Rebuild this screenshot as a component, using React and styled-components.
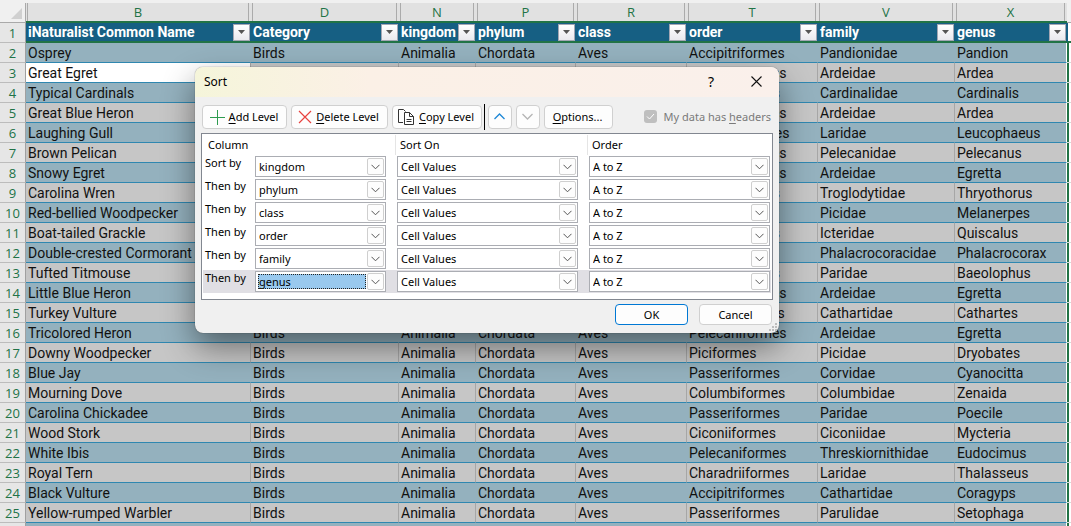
import React, { useState } from "react";
import styled, { createGlobalStyle } from "styled-components";

const columns = [
  { letter: "B", name: "iNaturalist Common Name", width: 225 },
  { letter: "D", name: "Category", width: 148 },
  { letter: "N", name: "kingdom", width: 77 },
  { letter: "P", name: "phylum", width: 100 },
  { letter: "R", name: "class", width: 111 },
  { letter: "T", name: "order", width: 131 },
  { letter: "V", name: "family", width: 137 },
  { letter: "X", name: "genus", width: 112 },
];

// common name, order, family, genus
const birds = [
  ["Osprey", "Accipitriformes", "Pandionidae", "Pandion"],
  ["Great Egret", "Pelecaniformes", "Ardeidae", "Ardea"],
  ["Typical Cardinals", "Passeriformes", "Cardinalidae", "Cardinalis"],
  ["Great Blue Heron", "Pelecaniformes", "Ardeidae", "Ardea"],
  ["Laughing Gull", "Charadriiformes", "Laridae", "Leucophaeus"],
  ["Brown Pelican", "Pelecaniformes", "Pelecanidae", "Pelecanus"],
  ["Snowy Egret", "Pelecaniformes", "Ardeidae", "Egretta"],
  ["Carolina Wren", "Passeriformes", "Troglodytidae", "Thryothorus"],
  ["Red-bellied Woodpecker", "Piciformes", "Picidae", "Melanerpes"],
  ["Boat-tailed Grackle", "Passeriformes", "Icteridae", "Quiscalus"],
  ["Double-crested Cormorant", "Suliformes", "Phalacrocoracidae", "Phalacrocorax"],
  ["Tufted Titmouse", "Passeriformes", "Paridae", "Baeolophus"],
  ["Little Blue Heron", "Pelecaniformes", "Ardeidae", "Egretta"],
  ["Turkey Vulture", "Accipitriformes", "Cathartidae", "Cathartes"],
  ["Tricolored Heron", "Pelecaniformes", "Ardeidae", "Egretta"],
  ["Downy Woodpecker", "Piciformes", "Picidae", "Dryobates"],
  ["Blue Jay", "Passeriformes", "Corvidae", "Cyanocitta"],
  ["Mourning Dove", "Columbiformes", "Columbidae", "Zenaida"],
  ["Carolina Chickadee", "Passeriformes", "Paridae", "Poecile"],
  ["Wood Stork", "Ciconiiformes", "Ciconiidae", "Mycteria"],
  ["White Ibis", "Pelecaniformes", "Threskiornithidae", "Eudocimus"],
  ["Royal Tern", "Charadriiformes", "Laridae", "Thalasseus"],
  ["Black Vulture", "Accipitriformes", "Cathartidae", "Coragyps"],
  ["Yellow-rumped Warbler", "Passeriformes", "Parulidae", "Setophaga"],
];

const levels = ["kingdom", "phylum", "class", "order", "family", "genus"];

const Sheet = () => {
  return (
    <Grid>
      <colgroup>
        <col style={{ width: 26 }} />
        {columns.map((col) => (
          <col key={col.letter} style={{ width: col.width }} />
        ))}
        <col />
      </colgroup>
      <thead>
        <tr>
          <Corner>
            <svg width="12" height="12" viewBox="0 0 12 12">
              <path d="M12 0V11H1Z" fill="#d0d0d0" />
            </svg>
          </Corner>
          {columns.map((col) => (
            <ColumnLetter key={col.letter} scope="col">
              <span>{col.letter}</span>
            </ColumnLetter>
          ))}
          <TailLetter />
        </tr>
      </thead>
      <tbody>
        <tr>
          <RowNumber scope="row">1</RowNumber>
          {columns.map((col) => (
            <FieldCell key={col.letter} scope="col">
              <Field>
                <span>{col.name}</span>
                <FilterButton aria-label={`Filter ${col.name}`}>
                  <svg width="9" height="5" viewBox="0 0 9 5">
                    <path d="M1 0H8L4.500 4Z" fill="#555" />
                  </svg>
                </FilterButton>
              </Field>
            </FieldCell>
          ))}
          <TailField />
        </tr>
        {birds.map(([common, order, family, genus], i) => (
          <BirdRow key={common} $banded={i % 2 === 0}>
            <RowNumber scope="row">{i + 2}</RowNumber>
            <Cell $active={i === 1}>{common}</Cell>
            <Cell>Birds</Cell>
            <Cell>Animalia</Cell>
            <Cell>Chordata</Cell>
            <Cell>Aves</Cell>
            <Cell>{order}</Cell>
            <Cell>{family}</Cell>
            <LastCell>{genus}</LastCell>
            <TailCell />
          </BirdRow>
        ))}
        <BirdRow $banded>
          <RowNumber />
          {columns.slice(1).map((col) => (
            <Cell key={col.letter} />
          ))}
          <LastCell />
          <TailCell />
        </BirdRow>
      </tbody>
    </Grid>
  );
};

const Combo = ({ id, label, options, value, selected }) => {
  return (
    <ComboBox>
      <Select id={id} aria-label={label} defaultValue={value} $selected={selected}>
        {options.map((option) => (
          <option key={option}>{option}</option>
        ))}
      </Select>
      <ComboArrow>
        <svg width="9" height="6" viewBox="0 0 9 6">
          <path d="M0.500 0.800L4.500 4.800L8.500 0.800" fill="none" stroke="#555" />
        </svg>
      </ComboArrow>
    </ComboBox>
  );
};

const SortDialog = () => {
  const [current, setCurrent] = useState(levels.length - 1);

  return (
    <Dialog role="dialog" aria-labelledby="sort-title">
      <TitleBar>
        <Title id="sort-title">Sort</Title>
        <TitleButton aria-label="Help">?</TitleButton>
        <TitleButton aria-label="Close">
          <svg width="11" height="11" viewBox="0 0 11 11">
            <path d="M0.500 0.500L10.500 10.500M10.500 0.500L0.500 10.500" stroke="#111" strokeWidth="1.100" />
          </svg>
        </TitleButton>
      </TitleBar>

      <Toolbar>
        <Button $width={85}>
          <svg width="16" height="16" viewBox="0 0 16 16">
            <path d="M8.500 1V16M1 8.500H16" stroke="#2e9b4f" />
          </svg>
          <span><u>A</u>dd Level</span>
        </Button>
        <Button $width={97}>
          <svg width="14" height="14" viewBox="0 0 14 14">
            <path d="M1 1L13 13M13 1L1 13" stroke="#e8423f" strokeWidth="1.200" />
          </svg>
          <span><u>D</u>elete Level</span>
        </Button>
        <Button $width={90}>
          <svg width="17" height="16" viewBox="0 0 17 16" fill="none" stroke="#333">
            <path d="M5 13.500H0.500V0.500H5.500L7.500 2.500" />
            <path d="M6.500 3.500H11.500L15.500 7.500V15.500H6.500Z" fill="#fff" />
            <path d="M11.500 3.500V7.500H15.500M8.500 10.500H13.500M8.500 12.500H13.500" />
          </svg>
          <span><u>C</u>opy Level</span>
        </Button>
        <Divider />
        <Button $width={24} aria-label="Move Up">
          <svg width="11" height="7" viewBox="0 0 11 7">
            <path d="M0.500 6L5.500 1L10.500 6" fill="none" stroke="#1e87d6" strokeWidth="1.300" />
          </svg>
        </Button>
        <Button $width={24} aria-label="Move Down">
          <svg width="11" height="7" viewBox="0 0 11 7">
            <path d="M0.500 1L5.500 6L10.500 1" fill="none" stroke="#b5b5b5" strokeWidth="1.300" />
          </svg>
        </Button>
        <Button $width={69}>
          <span><u>O</u>ptions...</span>
        </Button>
        <HeadersOption htmlFor="has-headers">
          <Checkbox id="has-headers" type="checkbox" defaultChecked disabled />
          <span>My data has <u>h</u>eaders</span>
        </HeadersOption>
      </Toolbar>

      <LevelList>
        <ListHead>
          <ListTitle>Column</ListTitle>
          <ListTitle $ruled>Sort On</ListTitle>
          <ListTitle $ruled>Order</ListTitle>
        </ListHead>
        {levels.map((level, i) => (
          <LevelRow key={level} $current={i === current} onClick={() => setCurrent(i)}>
            <LevelLabel htmlFor={`level-${i}`}>{i === 0 ? "Sort by" : "Then by"}</LevelLabel>
            <Combo id={`level-${i}`} options={levels} value={level} selected={i === current} />
            <Combo
              label={`Sort ${level} on`}
              options={["Cell Values", "Cell Color", "Font Color"]}
              value="Cell Values"
            />
            <Combo
              label={`Order of ${level}`}
              options={["A to Z", "Z to A", "Custom List..."]}
              value="A to Z"
            />
          </LevelRow>
        ))}
      </LevelList>

      <Footer>
        <FooterButton $primary>OK</FooterButton>
        <FooterButton>Cancel</FooterButton>
      </Footer>
      <Grip width="9" height="9" viewBox="0 0 9 9" fill="#bdbdbd">
        <path d="M6 0h2v2h-2zM3 3h2v2h-2zM6 3h2v2h-2zM0 6h2v2h-2zM3 6h2v2h-2zM6 6h2v2h-2z" />
      </Grip>
    </Dialog>
  );
};

const App = () => {
  return (
    <Page>
      <GlobalStyle />
      <Sheet />
      <SortDialog />
    </Page>
  );
};

export default App;

const GlobalStyle = createGlobalStyle`
  * {
    box-sizing: border-box;
  }

  body {
    margin: 0;
  }

  button,
  select {
    font: inherit;
    color: inherit;
  }
`;

const Page = styled.main`
  position: relative;
  height: 100vh;
  overflow: hidden;
  padding-top: 3px;
  background: #f0f0f0;
  font-family: Roboto, "Liberation Sans", sans-serif;
  font-size: 14px;
  color: #111;
`;

const Grid = styled.table`
  width: 100%;
  table-layout: fixed;
  border-collapse: separate;
  border-spacing: 0;
  line-height: 17px;

  th,
  td {
    height: 20px;
    padding: 0;
    white-space: nowrap;
  }
`;

const Corner = styled.td`
  background: #f0f0f0;
  border-right: 1px solid #a9a9a9;
  border-bottom: 1px solid #a9a9a9;

  svg {
    display: block;
    margin: 2px 3px 0 auto;
  }
`;

const ColumnLetter = styled.th`
  background: #e1e1e1;
  border-bottom: 2px solid #217346;
  color: #217346;
  font-family: "Open Sans", sans-serif;
  font-size: 13px;
  font-weight: 400;

  span {
    display: block;
    height: 18px;
    margin: 0 2px 0 1px;
    border: solid #ababab;
    border-width: 0 1px;
    line-height: 19px;
  }
`;

const TailLetter = styled.td`
  background: #f0f0f0;
  border-bottom: 1px solid #a9a9a9;
`;

const RowNumber = styled.th`
  && {
    padding-top: 2px;
  }
  background: #e6e6e6;
  border-right: 1px solid #a0a0a0;
  border-bottom: 1px solid #bcbcbc;
  color: #217346;
  font-family: "Open Sans", sans-serif;
  font-size: 13px;
  font-weight: 400;
`;

const FieldCell = styled.th`
  background: #165f83;
  border-bottom: 2px solid #217346;
  color: #fff;
  font-weight: 700;
  text-align: left;
`;

const Field = styled.div`
  display: flex;
  align-items: flex-end;
  justify-content: space-between;
  height: 18px;
  padding: 0 1px 0 2px;
`;

const FilterButton = styled.button`
  display: grid;
  place-items: center;
  flex: none;
  width: 17px;
  height: 17px;
  padding: 0;
  background: linear-gradient(#fff, #e9e9ee);
  border: 1px solid #a3a6b3;
`;

const TailField = styled.td`
  background: #fff;
  border-left: 1px solid #165f83;
  border-bottom: 2px solid #217346;
`;

const Cell = styled.td`
  && {
    padding: 2px 0 0 2px;
  }
  border-right: 1px solid #a6a6a6;
  border-bottom: 1px solid #2f87b0;
  ${(p) => p.$active && "background: #fff;"}
`;

const LastCell = styled(Cell)`
  &&& {
    border-right-color: #fff;
  }
`;

const TailCell = styled.td`
  background: #fff;
  border-bottom: 1px solid #dadada;
  box-shadow: inset 2px 0 #217346;
`;

const BirdRow = styled.tr`
  background: ${(p) => (p.$banded ? "#94b1be" : "#c6c6c6")};

  ${Cell} {
    ${(p) => p.$banded && "border-right-color: transparent;"}
  }
`;

const Dialog = styled.section`
  position: absolute;
  top: 67px;
  left: 195px;
  width: 584px;
  overflow: hidden;
  background: #f0f0f0;
  border-radius: 8px;
  box-shadow: 0 0 1px rgba(0, 0, 0, 0.7), 0 14px 32px rgba(0, 0, 0, 0.45);
  font-family: "Noto Sans", "Open Sans", sans-serif;
  font-size: 11px;
  color: #000;

  u {
    text-underline-offset: 2px;
  }
`;

const TitleBar = styled.header`
  display: flex;
  align-items: center;
  height: 30px;
  padding: 0 9px 2px;
  background: linear-gradient(90deg, #f5f5da, #fbf0e6 30%, #faf0eb);
`;

const Title = styled.h1`
  flex: 1;
  margin: 0;
  font-size: 12px;
  font-weight: 400;
`;

const TitleButton = styled.button`
  display: grid;
  place-items: center;
  width: 28px;
  height: 28px;
  padding: 0;
  background: none;
  border: 0;
  font-size: 14px;

  & + & {
    margin-left: 17px;
  }
`;

const Toolbar = styled.div`
  display: flex;
  align-items: center;
  gap: 4px;
  padding: 8px 8px 4px 7px;
`;

const Button = styled.button`
  display: flex;
  align-items: center;
  justify-content: center;
  gap: 4px;
  width: ${(p) => p.$width}px;
  height: 24px;
  padding: 0 2px 1px 0;
  background: #fdfdfd;
  border: 1px solid #d0d0d0;
  border-radius: 4px;
  white-space: nowrap;
`;

const Divider = styled.div`
  width: 1px;
  height: 26px;
  margin: -1px -1px -1px -2px;
  background: #000;
`;

const HeadersOption = styled.label`
  display: flex;
  align-items: center;
  gap: 7px;
  margin-left: auto;
  padding-bottom: 1px;
  color: #7a7a7a;
`;

const Checkbox = styled.input`
  appearance: none;
  width: 13px;
  height: 13px;
  margin: 0;
  background: #bfbfbf
    url("data:image/svg+xml,%3Csvg xmlns='http://www.w3.org/2000/svg' viewBox='0 0 13 13'%3E%3Cpath d='M3 6.500L5.500 9L10 4' fill='none' stroke='white'/%3E%3C/svg%3E");
  border-radius: 3px;
`;

const LevelList = styled.div`
  margin: 0 6px;
  padding: 1px 1px 6px;
  background: #fff;
  border: 1px solid #828790;
`;

const ListHead = styled.div`
  display: grid;
  grid-template-columns: 192px 192px 1fr;
  height: 20px;
`;

const ListTitle = styled.div`
  padding-left: 4px;
  border-left: 1px solid ${(p) => (p.$ruled ? "#e5e5e5" : "transparent")};
  line-height: 20px;
`;

const LevelRow = styled.div`
  display: grid;
  grid-template-columns: 41px 131px 181px 181px;
  column-gap: 11px;
  align-items: center;
  height: 23px;
  background: ${(p) => (p.$current ? "#e0dfe4" : "#fff")};
`;

const LevelLabel = styled.label`
  align-self: start;
  padding-left: 2px;
  line-height: 16px;
  white-space: nowrap;
`;

const ComboBox = styled.div`
  display: grid;
  height: 21px;
  background: #fff;
  border: 1px solid #abadb3;
`;

const Select = styled.select`
  grid-area: 1 / 1;
  appearance: none;
  min-width: 0;
  margin: 2px 19px 2px 2px;
  padding: 0 1px;
  border: 0;
  outline: ${(p) => (p.$selected ? "1px dotted #222" : "none")};
  outline-offset: -1px;
  background: ${(p) => (p.$selected ? "#99c9ef" : "#fff")};
  line-height: 15px;
`;

const ComboArrow = styled.span`
  grid-area: 1 / 1;
  justify-self: end;
  display: grid;
  place-items: center;
  width: 17px;
  height: 17px;
  margin: 1px;
  background: #fdfdfd;
  border: 1px solid #cfcfcf;
  border-radius: 2px;
  pointer-events: none;
`;

const Footer = styled.footer`
  display: flex;
  justify-content: flex-end;
  gap: 11px;
  padding: 4px 7px 8px;
`;

const FooterButton = styled.button`
  width: 73px;
  height: 21px;
  padding: 0;
  background: #fdfdfd;
  border: 1px solid ${(p) => (p.$primary ? "#0078d4" : "#d0d0d0")};
  border-radius: 4px;
`;

const Grip = styled.svg`
  position: absolute;
  right: 1px;
  bottom: 1px;
`;
